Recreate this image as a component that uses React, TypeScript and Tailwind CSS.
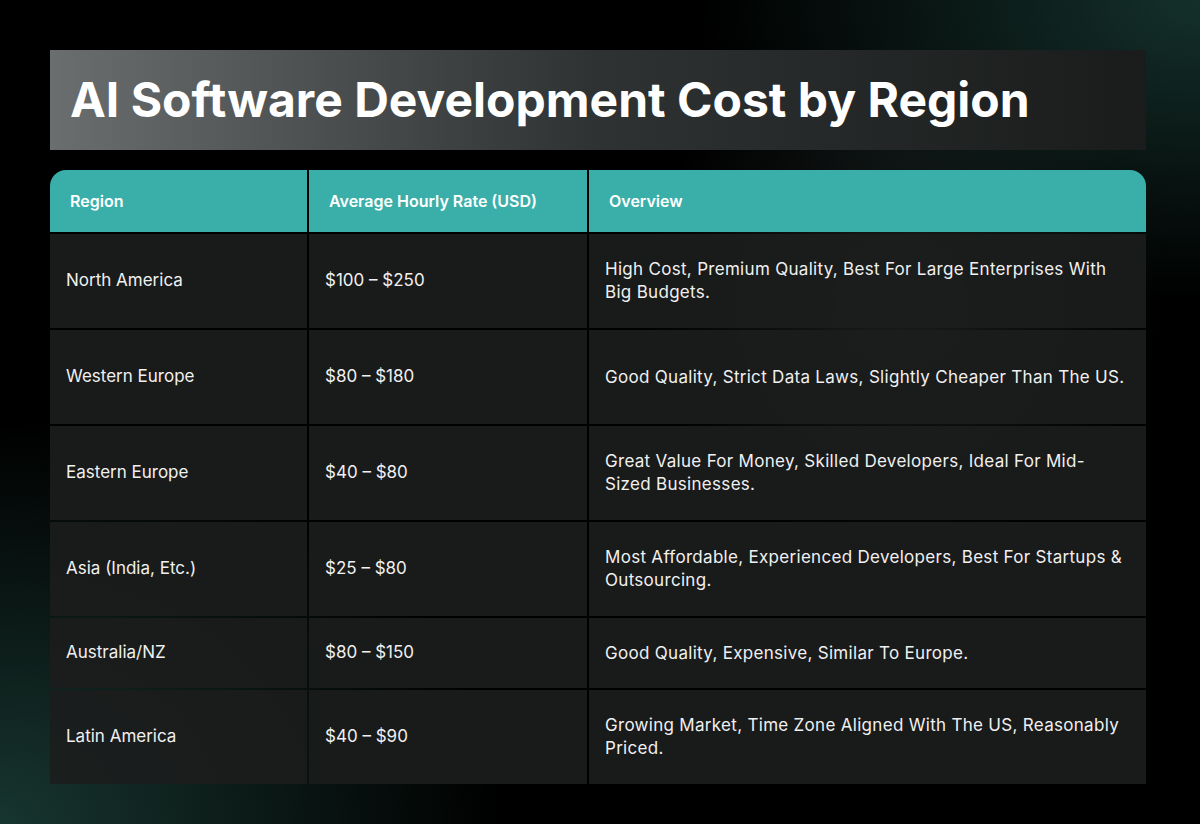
const rows = [
  ["North America", "$100 – $250", "High Cost, Premium Quality, Best For Large Enterprises With Big Budgets.", "h-[94px]"],
  ["Western Europe", "$80 – $180", "Good Quality, Strict Data Laws, Slightly Cheaper Than The US.", "h-[94px]"],
  ["Eastern Europe", "$40 – $80", "Great Value For Money, Skilled Developers, Ideal For Mid-Sized Businesses.", "h-[94px]"],
  ["Asia (India, Etc.)", "$25 – $80", "Most Affordable, Experienced Developers, Best For Startups & Outsourcing.", "h-[94px]"],
  ["Australia/NZ", "$80 – $150", "Good Quality, Expensive, Similar To Europe.", "h-[70px]"],
  ["Latin America", "$40 – $90", "Growing Market, Time Zone Aligned With The US, Reasonably Priced.", "h-[94px]"],
];

export default function App() {
  return (
    <div
      className="w-[1200px] h-[824px] overflow-hidden bg-black px-[50px] pt-[50px] font-[Inter]"
      style={{
        backgroundImage:
          "radial-gradient(ellipse 500px 400px at 0% 100%, #17352f 0%, transparent 100%), radial-gradient(ellipse 500px 300px at 100% 0%, #14302b 0%, transparent 100%), radial-gradient(circle 260px at 900px 300px, #1a1d1d 0%, transparent 100%)",
      }}
    >
      <div className="w-[1096px] h-[100px] flex items-center pl-[20px] bg-gradient-to-r from-[#6a6e6e] via-[#2f3232] to-[#1a1c1c]">
        <h1 className="text-[48px] font-bold text-white">AI Software Development Cost by Region</h1>
      </div>
      <div className="w-[1096px] mt-[20px] flex flex-col gap-[2px]">
        <div className="grid grid-cols-[257px_278px_557px] gap-[2px] h-[62px] rounded-t-[16px] overflow-hidden">
          <div className="bg-[#3aafa9] flex items-center pl-[20px] text-white font-semibold text-[16px]">Region</div>
          <div className="bg-[#3aafa9] flex items-center pl-[20px] text-white font-semibold text-[16px]">Average Hourly Rate (USD)</div>
          <div className="bg-[#3aafa9] flex items-center pl-[20px] text-white font-semibold text-[16px]">Overview</div>
        </div>
        {rows.map(([r, p, o, h]) => (
          <div key={r} className={`grid grid-cols-[257px_278px_557px] gap-[2px] ${h}`}>
            <div className="bg-[#1c1d1d]/90 flex items-center pl-[16px] text-[#f0f0f0] text-[17px]">{r}</div>
            <div className="bg-[#1c1d1d]/90 flex items-center pl-[16px] text-[#f0f0f0] text-[17px]">{p}</div>
            <div className="bg-[#1c1d1d]/90 flex items-center pl-[16px] pr-[20px] text-[#f0f0f0] text-[17px] leading-[23px] tracking-[0.3px]">{o}</div>
          </div>
        ))}
      </div>
    </div>
  );
}
